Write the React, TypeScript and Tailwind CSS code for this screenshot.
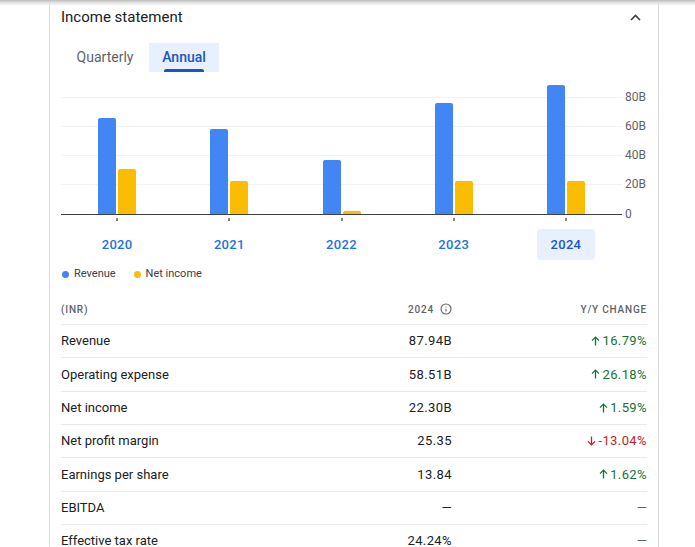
import { Info } from "lucide-react";

type Year = { year: string; revenue: number; net: number };

const years: Year[] = [
  { year: "2020", revenue: 65.6, net: 30.8 },
  { year: "2021", revenue: 58.1, net: 22.6 },
  { year: "2022", revenue: 36.9, net: 2.1 },
  { year: "2023", revenue: 75.9, net: 22.6 },
  { year: "2024", revenue: 87.94, net: 22.3 },
];

const gridLines = [
  { label: "80B", top: 17 },
  { label: "60B", top: 46 },
  { label: "40B", top: 75 },
  { label: "20B", top: 104 },
  { label: "0", top: 134 },
];

type Row = { label: string; value: string; change: string; dir: "up" | "down" | "none" };

const rows: Row[] = [
  { label: "Revenue", value: "87.94B", change: "16.79%", dir: "up" },
  { label: "Operating expense", value: "58.51B", change: "26.18%", dir: "up" },
  { label: "Net income", value: "22.30B", change: "1.59%", dir: "up" },
  { label: "Net profit margin", value: "25.35", change: "-13.04%", dir: "down" },
  { label: "Earnings per share", value: "13.84", change: "1.62%", dir: "up" },
  { label: "EBITDA", value: "—", change: "—", dir: "none" },
  { label: "Effective tax rate", value: "24.24%", change: "—", dir: "none" },
];

// 80B == 117px
const px = (v: number) => (v * 117) / 80;

function Arrow({ down }: { down?: boolean }) {
  return (
    <svg width="9" height="10" viewBox="0 0 9 10" className={down ? "rotate-180" : ""} fill="none">
      <path d="M4.5 9.5V1.2M1 4.6L4.5 1.1 8 4.6" stroke="currentColor" strokeWidth="1.3" />
    </svg>
  );
}

export default function App() {
  return (
    <div className="relative w-[695px] h-[547px] overflow-hidden bg-white font-['Roboto',sans-serif] text-[#202124]">
      <div className="absolute top-0 left-0 right-0 h-[6px] bg-gradient-to-b from-[#bdbdbd] via-[#e6e6e6] to-transparent z-10" />

      <div className="ml-[49px] w-[610px] h-full border-x border-[#dadce0] pl-[11px] pr-[11px]">
        {/* header */}
        <div className="pt-[7px] h-[27px] flex items-center justify-between">
          <h2 className="text-[15px] leading-[20px] text-[#202124]">Income statement</h2>
          <svg width="11" height="7" viewBox="0 0 11 7" className="mr-[6px]" fill="none">
            <path d="M1 6L5.5 1.5 10 6" stroke="#3c4043" strokeWidth="1.6" />
          </svg>
        </div>

        {/* tabs */}
        <div className="mt-[16px] flex h-[29px] text-[14px]">
          <button className="w-[88px] text-[#5f6368]">Quarterly</button>
          <button className="relative w-[70px] bg-[#e8f0fe] text-[#1a56c2] font-medium">
            Annual
            <span className="absolute left-[15px] bottom-0 w-[40px] h-[3px] rounded-t-[2px] bg-[#1a56c2]" />
          </button>
        </div>

        {/* chart */}
        <div className="mt-[8px] flex">
          <div className="w-[561px]">
            <div className="relative h-[134px]">
              {gridLines.slice(0, 4).map((g) => (
                <div key={g.label} className="absolute left-0 right-0 h-px bg-[#f1f3f4]" style={{ top: g.top }} />
              ))}
              <div className="absolute inset-0 flex">
                {years.map((y) => (
                  <div key={y.year} className="flex-1 flex items-end justify-center gap-[2px]">
                    <div className="w-[18px] rounded-t-[2px] bg-[#4285f4]" style={{ height: px(y.revenue) }} />
                    <div className="w-[18px] rounded-t-[2px] bg-[#fbbc04]" style={{ height: px(y.net) }} />
                  </div>
                ))}
              </div>
            </div>
            <div className="h-px bg-[#3c4043]" />
            <div className="flex h-[14px]">
              {years.map((y) => (
                <div key={y.year} className="flex-1 flex justify-center pt-[3px]">
                  <div className="w-[2px] h-[3px] bg-[#80868b]" />
                </div>
              ))}
            </div>
            <div className="flex h-[31px]">
              {years.map((y) => (
                <div key={y.year} className="flex-1 flex justify-center">
                  <div
                    className={
                      y.year === "2024"
                        ? "w-[58px] h-[31px] rounded-[4px] bg-[#e8f0fe] flex items-center justify-center text-[13px] font-medium tracking-[0.3px] text-[#1a56c2]"
                        : "w-[58px] h-[31px] flex items-center justify-center text-[13px] font-medium tracking-[0.3px] text-[#1a73e8]"
                    }
                  >
                    {y.year}
                  </div>
                </div>
              ))}
            </div>
          </div>
          <div className="relative w-[25px] h-[135px] text-[12px] leading-[14px] text-[#5f6368]">
            {gridLines.map((g) => (
              <span key={g.label} className="absolute left-[3px]" style={{ top: g.top - 7 }}>
                {g.label}
              </span>
            ))}
          </div>
        </div>

        {/* legend */}
        <div className="mt-[7px] h-[14px] flex items-center gap-[18px] text-[11px] text-[#3c4043]">
          <div className="flex items-center gap-[5px] pl-[1px]">
            <span className="w-[7px] h-[7px] rounded-full bg-[#4285f4]" />
            Revenue
          </div>
          <div className="flex items-center gap-[5px]">
            <span className="w-[7px] h-[7px] rounded-full bg-[#fbbc04]" />
            Net income
          </div>
        </div>

        {/* table */}
        <div className="mt-[13px]">
          <div className="grid grid-cols-[250px_141px_195px] h-[31px] items-center border-b border-[#e8eaed] text-[10px] font-medium tracking-[0.8px] text-[#5f6368]">
            <span>(INR)</span>
            <span className="flex items-center justify-end gap-[6px]">
              2024
              <Info size={12} strokeWidth={2.2} className="text-[#5f6368]" />
            </span>
            <span className="text-right">Y/Y CHANGE</span>
          </div>
          {rows.map((r) => (
            <div
              key={r.label}
              className="grid grid-cols-[250px_141px_195px] h-[33.33px] items-center border-b border-[#e8eaed] text-[13px]"
            >
              <span className="text-[#202124]">{r.label}</span>
              <span className="text-right tracking-[0.4px] text-[#202124]">{r.value}</span>
              <span
                className={
                  r.dir === "up"
                    ? "flex items-center justify-end gap-[2px] tracking-[0.4px] text-[#137333]"
                    : r.dir === "down"
                    ? "flex items-center justify-end gap-[2px] tracking-[0.4px] text-[#c5221f]"
                    : "flex items-center justify-end text-[#5f6368]"
                }
              >
                {r.dir !== "none" && <Arrow down={r.dir === "down"} />}
                {r.change}
              </span>
            </div>
          ))}
        </div>
      </div>
    </div>
  );
}
